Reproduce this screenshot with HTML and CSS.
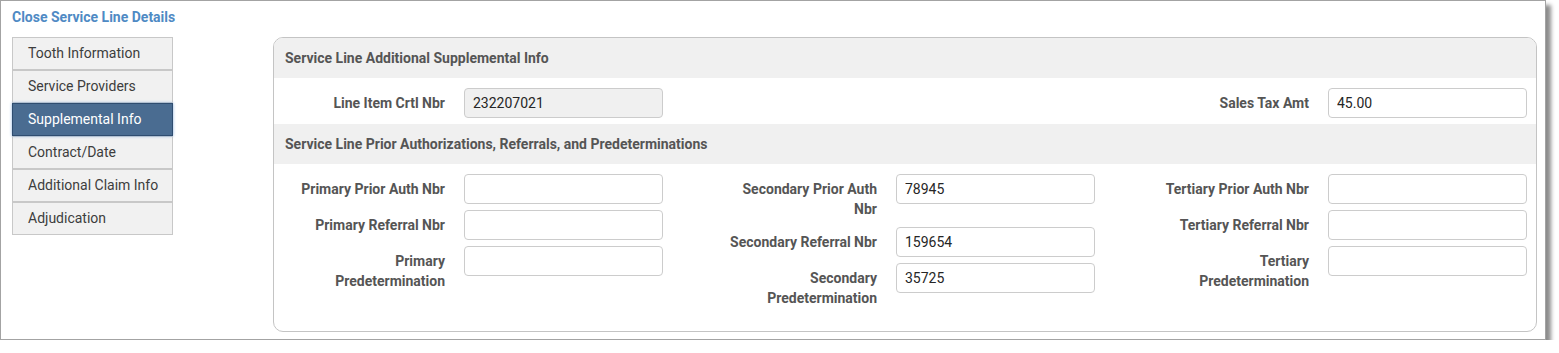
FILE: index.html
```html
<!DOCTYPE html>
<html lang="en">
<head>
    <meta charset="UTF-8">
    <meta name="viewport" content="width=device-width, initial-scale=1.0">
    <title>Service Line Details</title>
    <link rel="stylesheet" href="styles.css">
</head>
<body>
    <div class="frame">
        <a class="close-link" href="#">Close Service Line Details</a>
        <div class="layout">
            <ul class="side-nav">
                <li class="nav-item">Tooth Information</li>
                <li class="nav-item">Service Providers</li>
                <li class="nav-item active">Supplemental Info</li>
                <li class="nav-item">Contract/Date</li>
                <li class="nav-item">Additional Claim Info</li>
                <li class="nav-item">Adjudication</li>
            </ul>

            <div class="panel">
                <div class="section-title">Service Line Additional Supplemental Info</div>
                <div class="section-body top-row">
                    <div class="col">
                        <div class="field">
                            <label>Line Item Crtl Nbr</label>
                            <input type="text" value="232207021" readonly>
                        </div>
                    </div>
                    <div class="col"></div>
                    <div class="col">
                        <div class="field">
                            <label>Sales Tax Amt</label>
                            <input type="text" value="45.00">
                        </div>
                    </div>
                </div>

                <div class="section-title">Service Line Prior Authorizations, Referrals, and Predeterminations</div>
                <div class="section-body">
                    <div class="col">
                        <div class="field">
                            <label>Primary Prior Auth Nbr</label>
                            <input type="text">
                        </div>
                        <div class="field">
                            <label>Primary Referral Nbr</label>
                            <input type="text">
                        </div>
                        <div class="field">
                            <label>Primary Predetermination</label>
                            <input type="text">
                        </div>
                    </div>
                    <div class="col">
                        <div class="field">
                            <label>Secondary Prior Auth Nbr</label>
                            <input type="text" value="78945">
                        </div>
                        <div class="field">
                            <label>Secondary Referral Nbr</label>
                            <input type="text" value="159654">
                        </div>
                        <div class="field">
                            <label>Secondary Predetermination</label>
                            <input type="text" value="35725">
                        </div>
                    </div>
                    <div class="col">
                        <div class="field">
                            <label>Tertiary Prior Auth Nbr</label>
                            <input type="text">
                        </div>
                        <div class="field">
                            <label>Tertiary Referral Nbr</label>
                            <input type="text">
                        </div>
                        <div class="field">
                            <label>Tertiary Predetermination</label>
                            <input type="text">
                        </div>
                    </div>
                </div>
            </div>
        </div>
    </div>
</body>
</html>
```

FILE: styles.css
```css
:root {
    --link-color: #4f8ac4;
    --label-color: #555;
    --text-color: #262626;
    --border-color: #c6c6c6;
    --header-bg: #f0f0f0;
    --active-bg: #4a6c91;
}

* {
    margin: 0;
    padding: 0;
    box-sizing: border-box;
}

body {
    font-family: Roboto, 'Liberation Sans', sans-serif;
    background-color: #fff;
    color: var(--text-color);
}

.frame {
    width: 1546px;
    height: 340px;
    border: 1px solid #a3a3a3;
    box-shadow: 5px 5px 4px rgba(0, 0, 0, 0.45);
    padding: 7px 8px 0 11px;
    background-color: #fff;
}

.close-link {
    display: block;
    font-size: 14px;
    font-weight: bold;
    line-height: 18px;
    color: var(--link-color);
    text-decoration: none;
    margin-bottom: 11px;
}

.layout {
    display: flex;
    gap: 100px;
    align-items: flex-start;
}

.side-nav {
    list-style: none;
    width: 161px;
    flex-shrink: 0;
}

.nav-item {
    height: 33px;
    line-height: 31px;
    padding-left: 15px;
    font-size: 14px;
    color: #3d3d3d;
    background-color: #f1f1f1;
    border: 1px solid #c8c8c8;
}

.nav-item.active {
    background-color: var(--active-bg);
    border-color: #2f4d70;
    color: #fff;
    box-shadow: 0 0 3px #8cb4e0;
    position: relative;
}

.panel {
    flex: 1;
    border: 1px solid #c4c4c4;
    border-radius: 10px;
    overflow: hidden;
    padding-bottom: 21px;
}

.section-title {
    height: 40px;
    line-height: 40px;
    padding-left: 11px;
    background-color: var(--header-bg);
    font-size: 14px;
    font-weight: bold;
    color: var(--label-color);
}

.section-body {
    display: grid;
    grid-template-columns: repeat(3, 1fr);
    column-gap: 43px;
    padding: 10px 9px 0 0;
}

.section-body.top-row {
    padding-bottom: 6px;
}

.col {
    display: flex;
    flex-direction: column;
    gap: 6px;
}

.field {
    display: grid;
    grid-template-columns: 171px 1fr;
    column-gap: 19px;
    align-items: start;
}

.field label {
    text-align: right;
    padding: 5px 0 2px 16px;
    font-size: 14px;
    font-weight: bold;
    line-height: 20px;
    color: var(--label-color);
}

.field input {
    height: 30px;
    width: 100%;
    border: 1px solid #ccc;
    border-radius: 4px;
    padding: 0 8px;
    font-family: inherit;
    font-size: 14px;
    color: var(--text-color);
    background-color: #fff;
}

.field input[readonly] {
    background-color: var(--header-bg);
}
```
